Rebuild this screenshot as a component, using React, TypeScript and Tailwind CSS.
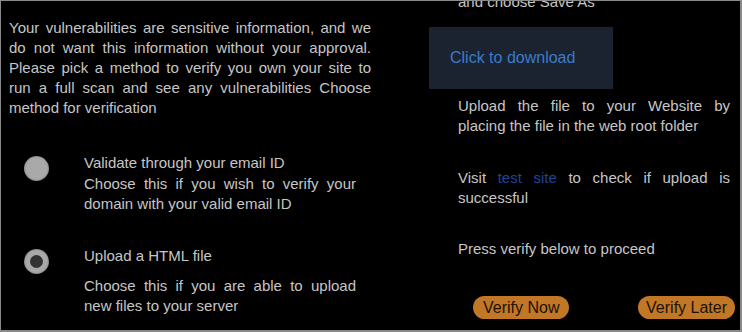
import React from 'react';

const font = { fontFamily: '"Liberation Sans", Arial, sans-serif' };

function Radio({ checked }: { checked?: boolean }) {
  return (
    <div className="w-[25px] h-[25px] rounded-full bg-[#a9a9a9] flex items-center justify-center shadow-[inset_0_0_2px_rgba(0,0,0,0.5)]">
      {checked && <div className="w-[13px] h-[13px] rounded-full bg-[#333]" />}
    </div>
  );
}

export default function App() {
  return (
    <div
      style={font}
      className="w-[742px] h-[332px] bg-black text-[#c6c6c6] text-[15px] leading-[20px] overflow-hidden border-l border-t border-r-2 border-b-2 border-[#8a8a8a] flex"
    >
      {/* left: method selection */}
      <div className="w-[380px] shrink-0 pl-[8px] pr-[10px] pt-[17px]">
        <p className="text-justify">
          Your vulnerabilities are sensitive information, and we do not want this information without your
          approval. Please pick a method to verify you own your site to run a full scan and see any
          vulnerabilities Choose method for verification
        </p>

        <div className="mt-[35px] flex">
          <div className="w-[75px] shrink-0 pl-[15px] pt-[3px]">
            <Radio />
          </div>
          <div className="w-[272px] text-justify">
            <div>Validate through your email ID</div>
            <div className="mt-[1px]">
              Choose this if you wish to verify your domain with your valid email ID
            </div>
          </div>
        </div>

        <div className="mt-[32px] flex">
          <div className="w-[75px] shrink-0 pl-[15px] pt-[3px]">
            <Radio checked />
          </div>
          <div className="w-[272px] text-justify">
            <div>Upload a HTML file</div>
            <div className="mt-[10px]">Choose this if you are able to upload new files to your server</div>
          </div>
        </div>
      </div>

      {/* right: upload steps */}
      <div className="flex-1 pl-[48px] pr-[10px] -mt-[9px]">
        <div className="pl-[29px]">and choose Save As</div>
        <div className="mt-[15px] w-[184px] h-[62px] bg-[#1b2330] flex items-center pl-[21px] text-[#3b7bc8] text-[16px]">
          Click to download
        </div>
        <p className="mt-[7px] pl-[29px] text-justify">
          Upload the file to your Website by placing the file in the web root folder
        </p>
        <p className="mt-[32px] pl-[29px] text-justify">
          Visit <span className="text-[#1d4596]">test site</span> to check if upload is successful
        </p>
        <p className="mt-[31px] pl-[29px]">Press verify below to proceed</p>
        <div className="mt-[37px] flex justify-between pl-[44px] -mr-[5px]">
          <button className="h-[23px] px-[10px] rounded-full bg-[#c27726] text-[#1a1208] text-[16px] leading-[23px]">
            Verify Now
          </button>
          <button className="h-[23px] px-[8px] rounded-full bg-[#c27726] text-[#1a1208] text-[16px] leading-[23px]">
            Verify Later
          </button>
        </div>
      </div>
    </div>
  );
}
